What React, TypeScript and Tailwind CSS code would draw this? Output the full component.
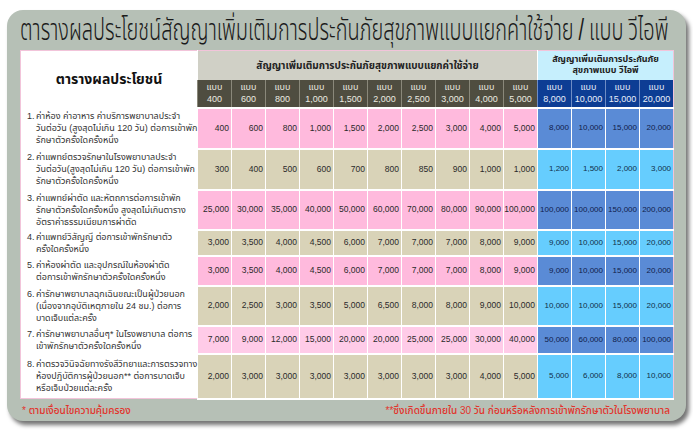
import React from "react";

const heads = ["400", "600", "800", "1,000", "1,500", "2,000", "2,500", "3,000", "4,000", "5,000"];
const vipHeads = ["8,000", "10,000", "15,000", "20,000"];

const rows = [
  {
    no: "1.",
    lines: ["ค่าห้อง ค่าอาหาร ค่าบริการพยาบาลประจำ", "วันต่อวัน (สูงสุดไม่เกิน 120 วัน) ต่อการเข้าพัก", "รักษาตัวครั้งใดครั้งหนึ่ง"],
    h: "h-[41px]",
    pink: true,
    vals: ["400", "600", "800", "1,000", "1,500", "2,000", "2,500", "3,000", "4,000", "5,000"],
    vip: ["8,000", "10,000", "15,000", "20,000"],
  },
  {
    no: "2.",
    lines: ["ค่าแพทย์ตรวจรักษาในโรงพยาบาลประจำ", "วันต่อวัน(สูงสุดไม่เกิน 120 วัน) ต่อการเข้าพัก", "รักษาตัวครั้งใดครั้งหนึ่ง"],
    h: "h-[41px]",
    pink: false,
    vals: ["300", "400", "500", "600", "700", "800", "850", "900", "1,000", "1,000"],
    vip: ["1,200", "1,500", "2,000", "3,000"],
  },
  {
    no: "3.",
    lines: ["ค่าแพทย์ผ่าตัด และหัตถการต่อการเข้าพัก", "รักษาตัวครั้งใดครั้งหนึ่ง สูงสุดไม่เกินตาราง", "อัตราค่าธรรมเนียมการผ่าตัด"],
    h: "h-[40px]",
    pink: true,
    vals: ["25,000", "30,000", "35,000", "40,000", "50,000", "60,000", "70,000", "80,000", "90,000", "100,000"],
    vip: ["100,000", "100,000", "150,000", "200,000"],
  },
  {
    no: "4.",
    lines: ["ค่าแพทย์วิสัญญี ต่อการเข้าพักรักษาตัว", "ครั้งใดครั้งหนึ่ง"],
    h: "h-[26px]",
    pink: false,
    vals: ["3,000", "3,500", "4,000", "4,500", "6,000", "7,000", "7,000", "7,000", "8,000", "9,000"],
    vip: ["9,000", "10,000", "15,000", "20,000"],
  },
  {
    no: "5.",
    lines: ["ค่าห้องผ่าตัด และอุปกรณ์ในห้องผ่าตัด", "ต่อการเข้าพักรักษาตัวครั้งใดครั้งหนึ่ง"],
    h: "h-[30px]",
    pink: true,
    vals: ["3,000", "3,500", "4,000", "4,500", "6,000", "7,000", "7,000", "7,000", "8,000", "9,000"],
    vip: ["9,000", "10,000", "15,000", "20,000"],
  },
  {
    no: "6.",
    lines: ["ค่ารักษาพยาบาลฉุกเฉินขณะเป็นผู้ป่วยนอก", "(เนื่องจากอุบัติเหตุภายใน 24 ชม.) ต่อการ", "บาดเจ็บแต่ละครั้ง"],
    h: "h-[40px]",
    pink: false,
    vals: ["2,000", "2,500", "3,000", "3,500", "5,000", "6,500", "8,000", "8,000", "9,000", "10,000"],
    vip: ["10,000", "10,000", "15,000", "20,000"],
  },
  {
    no: "7.",
    lines: ["ค่ารักษาพยาบาลอื่นๆ* ในโรงพยาบาล ต่อการ", "เข้าพักรักษาตัวครั้งใดครั้งหนึ่ง"],
    h: "h-[28px]",
    pink: true,
    light: true,
    vals: ["7,000", "9,000", "12,000", "15,000", "20,000", "20,000", "25,000", "25,000", "30,000", "40,000"],
    vip: ["50,000", "60,000", "80,000", "100,000"],
  },
  {
    no: "8.",
    lines: ["ค่าตรวจวินิจฉัยทางรังสีวิทยาและการตรวจทาง", "ห้องปฏิบัติการผู้ป่วยนอก** ต่อการบาดเจ็บ", "หรือเจ็บป่วยแต่ละครั้ง"],
    h: "h-[45px]",
    pink: false,
    vals: ["2,000", "3,000", "3,000", "3,000", "3,000", "3,000", "3,000", "3,000", "4,000", "5,000"],
    vip: ["5,000", "6,000", "8,000", "10,000"],
  },
];

export default function App() {
  return (
    <div className="w-[693px] h-[431px] bg-white pt-[10px] pl-[7px] font-['Liberation_Sans','Noto_Sans_Thai',sans-serif]">
      <div className="w-[679px] h-[411px] rounded-[16px] bg-[#b6c0b6] shadow-[3px_4px_4px_rgba(0,0,0,0.55)] flex flex-col pl-[13px]">
        <div className="h-[40px] flex items-center overflow-visible">
          <span className="inline-block origin-left scale-x-[0.665] text-[30px] font-light text-[#1a1a1a] leading-none whitespace-nowrap [word-spacing:-1px]">
            ตารางผลประโยชน์สัญญาเพิ่มเติมการประกันภัยสุขภาพแบบแยกค่าใช้จ่าย / แบบ วีไอพี
          </span>
        </div>
        <table className="table-fixed border-collapse w-[653px] border border-[#f2c4da] text-[8.5px] text-[#2a2a2a]">
          <colgroup>
            <col className="w-[177px]" />
            {Array.from({ length: 14 }).map((_, i) => (
              <col key={i} className="w-[34px]" />
            ))}
          </colgroup>
          <thead>
            <tr className="h-[29px]">
              <th rowSpan={2} className="bg-white text-[14px] font-bold text-[#111] align-middle">
                ตารางผลประโยชน์
              </th>
              <th colSpan={10} className="bg-[#d0d0c6] text-[10px] font-bold text-[#222] border-l border-white">
                สัญญาเพิ่มเติมการประกันภัยสุขภาพแบบแยกค่าใช้จ่าย
              </th>
              <th colSpan={4} className="bg-[#c6effd] text-[9px] leading-[11px] font-bold text-[#222] border-l border-white">
                สัญญาเพิ่มเติมการประกันภัย
                <br />
                สุขภาพแบบ วีไอพี
              </th>
            </tr>
            <tr className="h-[28px]">
              {heads.map((h) => (
                <th key={h} className="bg-[#4f4d40] text-[#ecebe0] text-[9px] font-normal leading-[12px] border-l border-[#8a887a] border-b-2 border-b-white">
                  แบบ
                  <br />
                  {h}
                </th>
              ))}
              {vipHeads.map((h) => (
                <th key={h} className="bg-[#0d3d94] text-[#e8eefa] text-[9px] font-normal leading-[12px] border-l border-[#6f8cc4] border-b-2 border-b-white">
                  แบบ
                  <br />
                  {h}
                </th>
              ))}
            </tr>
          </thead>
          <tbody>
            {rows.map((r) => (
              <tr key={r.no} className={r.h}>
                <td className="bg-white align-middle pl-[6px] text-[9px] leading-[12px] text-[#333]">
                  <div className="flex">
                    <span className="w-[9px] shrink-0">{r.no}</span>
                    <div>
                      {r.lines.map((l) => (
                        <div key={l} className="whitespace-nowrap">{l}</div>
                      ))}
                    </div>
                  </div>
                </td>
                {r.vals.map((v, i) => (
                  <td
                    key={i}
                    className={`text-right pr-[2px] border-l border-white border-b-2 border-b-white whitespace-nowrap ${
                      r.pink ? (r.light ? "bg-[#ffcbe8]" : "bg-[#ffbadd]") : "bg-[#d9d3b8]"
                    }`}
                  >
                    {v}
                  </td>
                ))}
                {r.vip.map((v, i) => (
                  <td
                    key={i}
                    className={`text-right pr-[2px] text-[8px] border-l border-white border-b-2 border-b-white whitespace-nowrap ${
                      r.pink ? "bg-[#5a8bd6] text-[#10204a]" : "bg-[#66cdfe] text-[#10304a]"
                    }`}
                  >
                    {v}
                  </td>
                ))}
              </tr>
            ))}
          </tbody>
        </table>
        <div className="flex-1 flex items-center justify-between pl-[2px] pr-[16px] text-[10px] font-medium text-[#e2332c]">
          <span>* ตามเงื่อนไขความคุ้มครอง</span>
          <span>**ซึ่งเกิดขึ้นภายใน 30 วัน ก่อนหรือหลังการเข้าพักรักษาตัวในโรงพยาบาล</span>
        </div>
      </div>
    </div>
  );
}
